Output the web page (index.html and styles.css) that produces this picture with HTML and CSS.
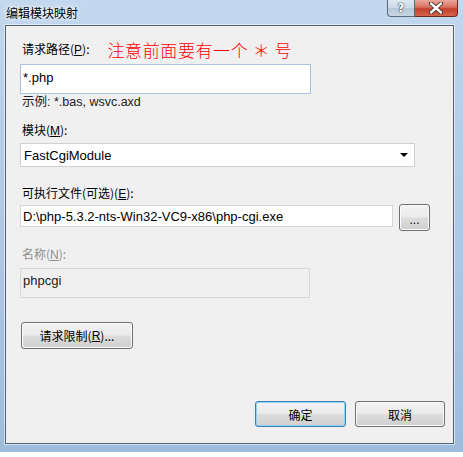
FILE: index.html
```html
<!DOCTYPE html>
<html lang="zh-CN">
<head>
  <meta charset="UTF-8">
  <title>编辑模块映射</title>
  <link rel="stylesheet" href="styles.css">
</head>
<body>

  <div class="window">
    <div class="titlebar">
      <span class="title">编辑模块映射</span>
      <div class="caption-btns">
        <span class="cap-btn help">?</span>
        <span class="cap-btn close">
          <svg width="16" height="12" viewBox="0 0 16 12">
            <path d="M3 1.5 L13 10.5 M13 1.5 L3 10.5" stroke="#3a2a2a" stroke-width="4.2" stroke-linecap="round"/>
            <path d="M3 1.5 L13 10.5 M13 1.5 L3 10.5" stroke="#fff" stroke-width="2.4" stroke-linecap="round"/>
          </svg>
        </span>
      </div>
    </div>

    <div class="client">
      <div class="field-head">
        <label class="lbl">请求路径(<u>P</u>):</label>
        <span class="note">注意前面要有一个 ＊ 号</span>
      </div>
      <input type="text" class="textbox path" value="*.php">
      <div class="hint">示例: *.bas, wsvc.axd</div>

      <label class="lbl module-lbl">模块(<u>M</u>):</label>
      <div class="combo">
        <span>FastCgiModule</span>
        <span class="arrow"></span>
      </div>

      <label class="lbl exec-lbl">可执行文件(可选)(<u>E</u>):</label>
      <div class="exec-row">
        <input type="text" class="textbox exec" value="D:\php-5.3.2-nts-Win32-VC9-x86\php-cgi.exe">
        <button class="btn browse">...</button>
      </div>

      <label class="lbl name-lbl disabled">名称(<u>N</u>):</label>
      <input type="text" class="textbox name" value="phpcgi" disabled>

      <button class="btn limit">请求限制(<u>R</u>)...</button>

      <div class="footer">
        <button class="btn ok">确定</button>
        <button class="btn cancel">取消</button>
      </div>
    </div>
  </div>

</body>
</html>
```

FILE: styles.css
```css
* {
  box-sizing: border-box;
  margin: 0;
  padding: 0;
}

body {
  width: 463px;
  height: 457px;
  background-color: #fff;
  font-family: "Liberation Sans", "Noto Sans CJK SC", sans-serif;
  font-size: 12px;
  color: #000;
  overflow: hidden;
}

.window {
  width: 463px;
  height: 452px;
  padding: 0 9px 8px 5px;
  display: flex;
  flex-direction: column;
  background: linear-gradient(to bottom, #c3d8ee 0%, #b4cde8 30%, #a9c4e2 70%, #9fbcdc 100%);
}

.titlebar {
  height: 25px;
  display: flex;
  justify-content: space-between;
  align-items: flex-start;
}

.title {
  margin: 5px 0 0 1px;
  line-height: 16px;
  font-family: "Noto Sans CJK SC", sans-serif;
  font-size: 12px;
  color: #000;
  text-shadow: 0 0 6px #fff, 0 0 3px #fff;
}

.caption-btns {
  display: flex;
  margin-right: -4px;
}

.cap-btn {
  height: 17px;
  display: flex;
  align-items: center;
  justify-content: center;
  border: 1px solid #5c6a79;
  border-top: none;
}

.help {
  width: 28px;
  border-radius: 0 0 0 4px;
  background: linear-gradient(to bottom, #dfe8f2 0%, #cbd8e6 50%, #b7c7d8 51%, #c7d5e3 100%);
  font-family: "DejaVu Sans", sans-serif;
  font-weight: bold;
  font-size: 12px;
  color: #fff;
  text-shadow: 0 0 1px #2c3a48, 0 0 1px #2c3a48, 0 0 1px #2c3a48;
}

.close {
  width: 43px;
  border-left: none;
  border-color: #6b2a22;
  border-radius: 0 0 4px 0;
  background: linear-gradient(to bottom, #e9a99c 0%, #d9705f 45%, #c2402c 55%, #d5624a 100%);
}

.client {
  flex: 1;
  display: flex;
  flex-direction: column;
  align-items: flex-start;
  padding: 13px 8px 16px 14px;
  background-color: #f0f0f0;
  border: 1px solid #56616d;
  box-shadow: 0 0 0 1px rgba(255, 255, 255, 0.55);
}

.lbl {
  display: block;
  padding-left: 2px;
  line-height: 16px;
  font-family: "Noto Sans CJK SC", sans-serif;
}

.lbl u {
  font-family: "Liberation Sans", sans-serif;
}

.disabled {
  color: #8f8f8f;
}

.field-head {
  height: 20px;
  display: flex;
  align-items: center;
}

.note {
  margin-left: 18px;
  font-family: "Noto Sans CJK SC", sans-serif;
  font-size: 17px;
  font-weight: 300;
  letter-spacing: 0.6px;
  color: #ff0000;
}

.textbox {
  display: block;
  padding: 0 2px;
  font-family: "Liberation Sans", sans-serif;
  font-size: 13px;
  color: #000;
  background-color: #fff;
  border: 1px solid #abadb3;
  outline: none;
}

.path {
  width: 291px;
  height: 30px;
  margin-top: 5px;
  border-color: #a9c3dc;
  padding-bottom: 4px;
}

.hint {
  padding-left: 2px;
  line-height: 16px;
  font-size: 12.5px;
  color: #222;
}

.module-lbl {
  margin-top: 12px;
}

.combo {
  width: 395px;
  height: 24px;
  margin-top: 4px;
  padding: 0 6px 0 3px;
  display: flex;
  align-items: center;
  justify-content: space-between;
  font-size: 13px;
  background-color: #fff;
  border: 1px solid #d0d0d0;
}

.arrow {
  width: 0;
  height: 0;
  border-left: 4px solid transparent;
  border-right: 4px solid transparent;
  border-top: 4px solid #000;
}

.exec-lbl {
  margin-top: 18px;
}

.exec-row {
  margin-top: 2px;
  display: flex;
  align-items: flex-start;
}

.exec {
  width: 373px;
  height: 22px;
  margin-top: 1px;
  border-color: #d6d6d6;
}

.name-lbl {
  margin-top: 15px;
}

.name {
  width: 290px;
  height: 30px;
  margin-top: 5px;
  padding-bottom: 5px;
  color: #222;
  background-color: #f0f0f0;
  border-color: #d9d9d9;
}

.btn {
  display: flex;
  align-items: center;
  justify-content: center;
  font-family: "Noto Sans CJK SC", sans-serif;
  font-size: 12px;
  color: #000;
  border: 1px solid #707070;
  border-radius: 3px;
  background: linear-gradient(to bottom, #f2f2f2 0%, #ebebeb 48%, #dddddd 52%, #cfcfcf 100%);
  box-shadow: inset 0 0 0 1px #fbfbfb;
}

.btn u {
  font-family: "Liberation Sans", sans-serif;
}

.browse {
  width: 31px;
  height: 27px;
  margin-left: 6px;
  font-family: "Liberation Sans", sans-serif;
  padding-top: 4px;
}

.limit {
  width: 112px;
  height: 27px;
  margin: 24px 0 0 1px;
}

.footer {
  margin-top: auto;
  align-self: stretch;
  display: flex;
  justify-content: flex-end;
  gap: 9px;
}

.ok,
.cancel {
  width: 91px;
  height: 26px;
}

.cancel {
  width: 90px;
}

.ok {
  border-color: #3c7fb1;
  box-shadow: inset 0 0 0 1px #8fd6f5;
}
```
